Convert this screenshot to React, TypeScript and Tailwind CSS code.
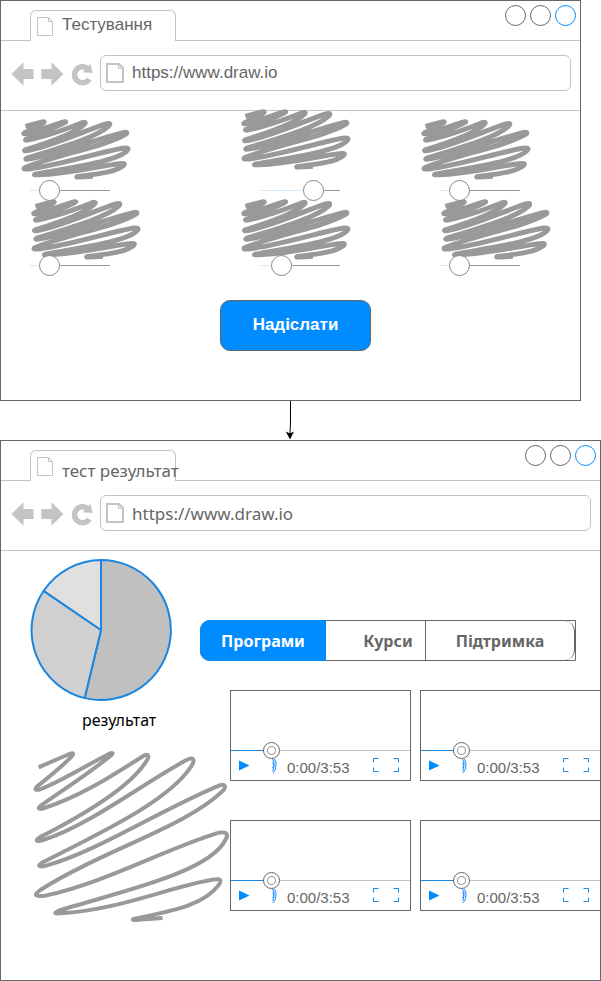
import React from "react";

const HUMAN = 'font-["Noto_Sans",sans-serif]';
const ARIAL = 'font-["Liberation_Sans",Arial,sans-serif]';

function PageIcon({ bold }: { bold?: boolean }) {
  return (
    <svg width="18" height="20" viewBox="0 0 18 20" fill="none" stroke="#c4c4c4" strokeWidth={bold ? 2 : 1} className="shrink-0" aria-hidden="true">
      <path d={bold ? "M1 1H13L17 5V19H1Z" : "M1.5 .5H12.5L16.5 4.5V18.5H1.5Z"} />
      <path d={bold ? "M12.5 1V5.5H17" : "M12.5 .5V4.5H16.5"} strokeWidth="1" />
    </svg>
  );
}

function BackIcon() {
  return (
    <svg width="23" height="24" viewBox="0 0 23 24" fill="#c4c4c4" aria-hidden="true">
      <path d="M.5 12L12.500 .3V7H22.500V17H12.500V23.700Z" />
    </svg>
  );
}

function ForwardIcon() {
  return (
    <svg width="23" height="24" viewBox="0 0 23 24" fill="#c4c4c4" aria-hidden="true">
      <path d="M22.500 12L10.500 .3V7H.3V17H10.500V23.700Z" />
    </svg>
  );
}

function ReloadIcon() {
  return (
    <svg width="23" height="23" viewBox="0 0 23 23" aria-hidden="true">
      <path d="M18.200 16.200A8 8 0 1 1 16.500 5.500" fill="none" stroke="#c4c4c4" strokeWidth="5.500" />
      <path d="M19.500 .8L21.500 10L11.500 9.300Z" fill="#c4c4c4" />
    </svg>
  );
}

type WindowProps = {
  title: string;
  human?: boolean;
  className?: string;
  children: React.ReactNode;
};

function BrowserWindow({ title, human, className = "", children }: WindowProps) {
  const font = human ? HUMAN : ARIAL;
  const circle = "size-[21px] rounded-full border bg-white";
  return (
    <section className={`border border-[#666666] bg-white ${className}`}>
      <header className="flex h-10 items-end">
        <div className="w-[29px] border-b border-[#c4c4c4]" />
        <div className="flex h-[31px] w-[146px] rounded-t-[6px] border border-b-0 border-[#c4c4c4] pt-[6px] pl-[5px]">
          <PageIcon />
          <h2
            className={`ml-2 text-[17px] leading-[20px] whitespace-nowrap text-[#666666] ${font} ${human ? "mt-1" : "-mt-[2px]"}`}
          >
            {title}
          </h2>
        </div>
        <div className="flex h-10 flex-1 justify-end gap-1 border-b border-[#c4c4c4] pt-1 pr-1">
          <button aria-label="Згорнути" className={`${circle} border-[#666666]`} />
          <button aria-label="Розгорнути" className={`${circle} border-[#666666]`} />
          <button aria-label="Закрити" className={`${circle} border-[#008cff]`} />
        </div>
      </header>
      <nav className="flex h-[70px] items-start border-b border-[#c4c4c4] pt-[14px] pr-[9px] pl-[10px]">
        <div className="mt-[7px] flex h-6 w-[89px] items-center gap-[7px]">
          <button aria-label="Назад"><BackIcon /></button>
          <button aria-label="Вперед"><ForwardIcon /></button>
          <button aria-label="Оновити"><ReloadIcon /></button>
        </div>
        <div className="flex h-9 min-w-0 flex-1 items-center rounded-[6px] border border-[#c4c4c4] pl-[5px]">
          <PageIcon bold />
          <input
            aria-label="Адреса"
            defaultValue="https://www.draw.io"
            className={`ml-2 h-[30px] min-w-0 flex-1 bg-transparent text-[17px] text-[#666666] outline-none ${font}`}
          />
        </div>
      </nav>
      {children}
    </section>
  );
}

function Scribble({ className, stroke = 4 }: { className: string; stroke?: number }) {
  return (
    <svg
      viewBox="47 42 575 498"
      preserveAspectRatio="none"
      className={`shrink-0 overflow-visible ${className}`}
      fill="none"
      stroke="#999999"
      strokeWidth={stroke}
      aria-hidden="true"
    >
      <path
        vectorEffect="non-scaling-stroke"
        d="M55 82C100 62 130 50 148 42C160 37 162 42 154 50C120 85 80 115 52 138C40 150 46 152 62 147C130 120 200 75 268 41C282 36 280 42 268 50C200 105 120 155 60 198C50 207 58 209 72 204C180 170 280 105 370 48C388 38 388 52 380 62C330 145 180 230 58 292C42 303 50 306 68 300C200 260 370 130 500 60C525 48 525 62 515 78C450 180 250 275 65 368C48 380 60 382 80 376C230 335 430 205 600 136C620 130 618 142 610 152C500 260 250 330 60 450C36 468 48 470 75 467C250 430 430 330 590 280C620 272 628 282 618 298C570 400 280 460 115 512C95 522 108 521 130 519C300 510 480 430 590 418C605 416 604 424 598 434C550 500 440 515 345 536C332 540 340 541 355 539L428 534"
      />
    </svg>
  );
}

const questions = [
  { value: 15, scribble: "ml-1 mb-[3px]", slider: "ml-[10px]" },
  { value: 73, scribble: "ml-1 mb-[13px]", slider: "ml-5" },
  { value: 15, scribble: "ml-1 mb-[3px]", slider: "ml-5" },
  { value: 15, scribble: "ml-[14px] -mb-[2px]", slider: "ml-[10px]" },
  { value: 18, scribble: "ml-1 -mb-[2px]", slider: "ml-5" },
  { value: 15, scribble: "ml-6 -mb-[2px]", slider: "ml-5" },
];

function Question({ index }: { index: number }) {
  const { value, scribble, slider } = questions[index];
  return (
    <div className="flex flex-col justify-end">
      <Scribble stroke={5} className={`h-[55px] w-[104px] ${scribble}`} />
      <input
        type="range"
        aria-label={`Відповідь ${index + 1}`}
        defaultValue={value}
        style={{ backgroundImage: `linear-gradient(to right, #d4e8f7 ${value}%, #999999 ${value}%)` }}
        className={`relative h-[21px] w-[80px] shrink-0 appearance-none bg-[length:100%_1px] bg-center bg-no-repeat [&::-webkit-slider-thumb]:size-[21px] [&::-webkit-slider-thumb]:appearance-none [&::-webkit-slider-thumb]:rounded-full [&::-webkit-slider-thumb]:border [&::-webkit-slider-thumb]:border-[#888888] [&::-webkit-slider-thumb]:bg-white ${slider}`}
      />
    </div>
  );
}

function PieChart() {
  return (
    <svg width="142" height="142" viewBox="0 0 142 142" role="img" aria-label="результат" stroke="#1a86e0" strokeWidth="2" strokeLinejoin="round">
      <path d="M71 71V1A70 70 0 1 1 54.700 139.100Z" fill="#c0c0c0" />
      <path d="M71 71L54.700 139.100A70 70 0 0 1 13.700 31.800Z" fill="#d0d0d0" />
      <path d="M71 71L13.700 31.800A70 70 0 0 1 71 1Z" fill="#e0e0e0" />
    </svg>
  );
}

function VideoPlayer({ index }: { index: number }) {
  return (
    <article className="h-[91px] border border-[#666666]">
      <input
        type="range"
        aria-label={`Перемотування ${index}`}
        defaultValue={20}
        className="mt-[51px] block h-[17px] w-full appearance-none bg-[linear-gradient(to_right,#1a86e0_22%,#c4c4c4_22%)] bg-[length:100%_1px] bg-center bg-no-repeat [&::-webkit-slider-thumb]:size-[17px] [&::-webkit-slider-thumb]:appearance-none [&::-webkit-slider-thumb]:rounded-full [&::-webkit-slider-thumb]:border [&::-webkit-slider-thumb]:border-[#666666] [&::-webkit-slider-thumb]:bg-[radial-gradient(circle,#ffffff_3px,#999999_4px,#ffffff_5px)]"
      />
      <div className="flex h-[18px] items-center pr-[11px] pl-2">
        <button aria-label="Відтворити">
          <svg width="11" height="11" viewBox="0 0 11 11" fill="#008cff" className="-mt-[6px]">
            <path d="M0 .5L10.500 5.500L0 10.500Z" />
          </svg>
        </button>
        <button aria-label="Гучність" className="ml-[22px]">
          <svg width="5" height="15" viewBox="0 0 5 15" fill="none" stroke="#1a8cff" className="-mt-1">
            <path d="M.5 0Q3 3.500 1.800 7Q1.500 8 .3 9M2.500 0Q5 4 3.600 9Q3 12 .8 14M.8 3Q3 7 .8 12" />
          </svg>
        </button>
        <span className={`ml-[10px] text-[15px] leading-[18px] text-[#666666] ${ARIAL}`}>0:00/3:53</span>
        <button aria-label="На весь екран" className="ml-auto">
          <svg width="26" height="14" viewBox="0 0 26 14" fill="none" stroke="#1a86e0" className="-mt-[6px]">
            <path d="M.5 4.500V.5H5.500M20.500 .5H25.500V4.500M25.500 9.500V13.500H20.500M5.500 13.500H.5V9.500" />
          </svg>
        </button>
      </div>
    </article>
  );
}

export default function App() {
  return (
    <main className="bg-white">
      <BrowserWindow title="Тестування" className="mr-5">
        <form className="pb-[49px]" onSubmit={(e) => e.preventDefault()}>
          <div className="grid grid-cols-[11fr_9fr_8fr] grid-rows-[90px_75px] pl-[19px]">
            {questions.map((_, i) => (
              <Question key={i} index={i} />
            ))}
          </div>
          <div className="mt-6 flex justify-center pl-[10px]">
            <button
              type="submit"
              className={`h-[51px] w-[151px] rounded-[10px] border border-[#666666] bg-[#008cff] pb-[2px] text-[17px] font-bold text-white ${ARIAL}`}
            >
              Надіслати
            </button>
          </div>
        </form>
      </BrowserWindow>

      <svg width="10" height="39" viewBox="0 0 10 39" className="ml-[285px] block" aria-hidden="true">
        <path d="M5.500 0V20L5 33" fill="none" stroke="#000000" />
        <path d="M5 38.500L.8 30.500L5 32.500L9 30.500Z" />
      </svg>

      <BrowserWindow title="тест результат" human>
        <div className="flex pb-[60px]">
          <div className="flex w-[199px] shrink-0 flex-col pt-2">
            <div className="ml-[29px]">
              <PieChart />
            </div>
            <p className={`mt-[9px] ml-[81px] text-[16px] leading-[20px] text-black ${HUMAN}`}>результат</p>
            <Scribble className="mt-6 ml-[35px] h-[166px] w-[191px]" />
          </div>
          <div className="min-w-0 flex-1 pt-[69px]">
            <div className={`mr-6 flex h-[41px] rounded-l-[10px] border border-[#666666] text-[16px] font-bold text-[#666666] ${HUMAN}`}>
              <button className="-my-px -ml-px w-[126px] rounded-l-[10px] bg-[#008cff] text-white">Програми</button>
              <button className="w-[99px] pl-[25px]">Курси</button>
              <button className="flex-1 rounded-r-[10px] border-r border-l border-[#666666]">
                Підтримка
              </button>
            </div>
            <div className="mt-[29px] -mr-px grid grid-cols-2 gap-x-[9px] gap-y-[39px] pl-[30px]">
              {[1, 2, 3, 4].map((n) => (
                <VideoPlayer key={n} index={n} />
              ))}
            </div>
          </div>
        </div>
      </BrowserWindow>
    </main>
  );
}
